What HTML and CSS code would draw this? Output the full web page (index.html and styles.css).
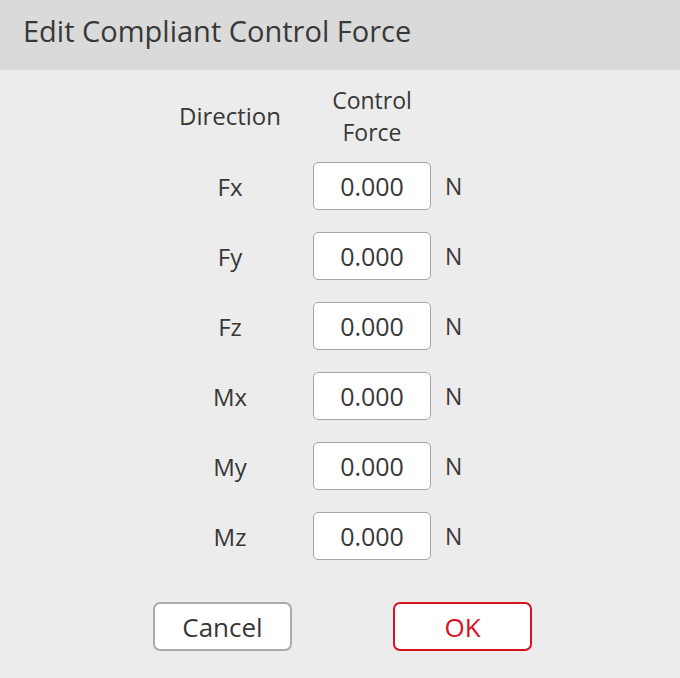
FILE: index.html
```html
<!DOCTYPE html>
<html>
<head>
<meta charset="utf-8">
<link rel="stylesheet" href="styles.css">
</head>
<body>
<div class="dialog">
  <div class="header"><h1 class="title">Edit Compliant Control Force</h1></div>
  <div class="content">
    <div class="grid">
      <div class="head head-dir">Direction</div>
      <div class="head head-force">Control<br>Force</div>
      <div class="head"></div>

      <div class="label">Fx</div><div class="field">0.000</div><div class="unit">N</div>
      <div class="label">Fy</div><div class="field">0.000</div><div class="unit">N</div>
      <div class="label">Fz</div><div class="field">0.000</div><div class="unit">N</div>
      <div class="label">Mx</div><div class="field">0.000</div><div class="unit">N</div>
      <div class="label">My</div><div class="field">0.000</div><div class="unit">N</div>
      <div class="label">Mz</div><div class="field">0.000</div><div class="unit">N</div>
    </div>
    <div class="buttons">
      <button class="btn btn-cancel">Cancel</button>
      <button class="btn btn-ok">OK</button>
    </div>
  </div>
</div>
</body>
</html>
```
FILE: styles.css
```css
html, body {
  margin: 0;
  padding: 0;
}
body {
  background: #ececec;
  font-family: "Open Sans", Lato, sans-serif;
  color: #383838;
  width: 680px;
  height: 678px;
  overflow: hidden;
}
.header {
  height: 70px;
  background: #dadada;
  display: flex;
  align-items: center;
  padding-left: 23px;
}
.title {
  margin: 0;
  font-size: 29px;
  font-weight: 400;
  color: #383838;
  padding-bottom: 10px;
}
.content {
  padding-top: 14px;
}
.grid {
  display: grid;
  grid-template-columns: 150px 118px auto;
  column-gap: 8px;
  row-gap: 22px;
  padding-left: 155px;
  font-size: 23px;
}
.head {
  line-height: 32px;
  text-align: center;
  margin-bottom: -8px;
}
.head-dir {
  align-self: center;
  font-size: 24px;
}
.label {
  display: flex;
  align-items: center;
  justify-content: center;
  font-size: 24px;
}
.field {
  height: 48px;
  box-sizing: border-box;
  border: 1.5px solid #a8a8a8;
  border-radius: 5px;
  background: #ffffff;
  display: flex;
  align-items: center;
  justify-content: center;
  font-size: 25px;
}
.unit {
  display: flex;
  align-items: center;
  padding-left: 6px;
  font-size: 23px;
}
.buttons {
  display: flex;
  gap: 101px;
  padding-left: 153px;
  margin-top: 42px;
}
.btn {
  width: 139px;
  height: 49px;
  box-sizing: border-box;
  border-radius: 7px;
  background: #ffffff;
  font-family: inherit;
  font-size: 26px;
  padding: 0;
}
.btn-cancel {
  border: 2px solid #ababab;
  color: #383838;
}
.btn-ok {
  border: 2px solid #d8121e;
  color: #d8121e;
}
```
